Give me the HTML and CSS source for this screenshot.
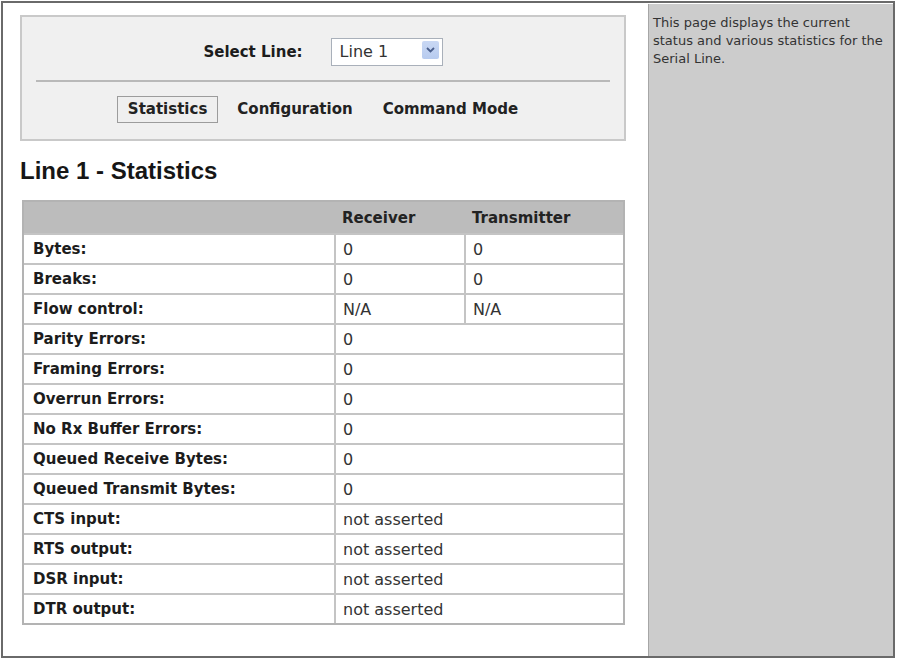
FILE: index.html
```html
<!DOCTYPE html>
<html lang="en">
<head>
    <meta charset="UTF-8">
    <title>Serial Line Statistics</title>
    <link rel="stylesheet" href="styles.css">
</head>
<body>
    <div class="frame">
        <div class="main">
            <div class="toolbox">
                <div class="line-select">
                    <span class="select-label">Select Line:</span>
                    <div class="select">
                        <span>Line 1</span>
                        <span class="select-arrow">
                            <svg width="9" height="6" viewBox="0 0 9 6"><path d="M1 1 L4.5 4.5 L8 1" fill="none" stroke="#4a5f8c" stroke-width="1.8"/></svg>
                        </span>
                    </div>
                </div>
                <div class="divider"></div>
                <div class="tabs">
                    <span class="tab active">Statistics</span>
                    <span class="tab">Configuration</span>
                    <span class="tab">Command Mode</span>
                </div>
            </div>

            <h1>Line 1 - Statistics</h1>

            <table class="stats">
                <colgroup>
                    <col class="col-label">
                    <col class="col-rx">
                    <col class="col-tx">
                </colgroup>
                <tr>
                    <th></th>
                    <th>Receiver</th>
                    <th>Transmitter</th>
                </tr>
                <tr><td class="label">Bytes:</td><td>0</td><td>0</td></tr>
                <tr><td class="label">Breaks:</td><td>0</td><td>0</td></tr>
                <tr><td class="label">Flow control:</td><td>N/A</td><td>N/A</td></tr>
                <tr><td class="label">Parity Errors:</td><td colspan="2">0</td></tr>
                <tr><td class="label">Framing Errors:</td><td colspan="2">0</td></tr>
                <tr><td class="label">Overrun Errors:</td><td colspan="2">0</td></tr>
                <tr><td class="label">No Rx Buffer Errors:</td><td colspan="2">0</td></tr>
                <tr><td class="label">Queued Receive Bytes:</td><td colspan="2">0</td></tr>
                <tr><td class="label">Queued Transmit Bytes:</td><td colspan="2">0</td></tr>
                <tr><td class="label">CTS input:</td><td colspan="2">not asserted</td></tr>
                <tr><td class="label">RTS output:</td><td colspan="2">not asserted</td></tr>
                <tr><td class="label">DSR input:</td><td colspan="2">not asserted</td></tr>
                <tr><td class="label">DTR output:</td><td colspan="2">not asserted</td></tr>
            </table>
        </div>

        <div class="help">
            This page displays the current status and various statistics for the Serial Line.
        </div>
    </div>
</body>
</html>
```

FILE: styles.css
```css
body {
    margin: 0;
    background-color: #fff;
    font-family: 'DejaVu Sans', sans-serif;
    color: #1c1c1c;
}

.frame {
    display: flex;
    margin: 1px 3px 0 1px;
    height: 653px;
    border: 2px solid #6a6a6a;
    background-color: #fff;
}

.main {
    width: 606px;
    padding: 12px 22px 0 17px;
}

.toolbox {
    background-color: #f0f0f0;
    border: 2px solid #c9c9c9;
    padding: 21px 0 16px;
}

.line-select {
    display: flex;
    justify-content: center;
    align-items: center;
    gap: 28px;
}

.select-label {
    font-size: 15px;
    font-weight: bold;
}

.select {
    display: flex;
    justify-content: space-between;
    align-items: flex-start;
    width: 112px;
    height: 28px;
    box-sizing: border-box;
    padding: 2px 3px 0 8px;
    background-color: #fff;
    border: 1px solid #a9b0ba;
    font-size: 16px;
    line-height: 22px;
    color: #333;
}

.select-arrow {
    display: flex;
    align-items: center;
    justify-content: center;
    width: 17px;
    height: 18px;
    background: linear-gradient(#c9d8f4, #b7cbef);
    border-radius: 2px;
}

.divider {
    height: 2px;
    background-color: #b9b9b9;
    margin: 14px 14px 14px;
}

.tabs {
    display: flex;
    justify-content: center;
    gap: 8px;
}

.tab {
    padding: 0 10px;
    height: 25px;
    line-height: 25px;
    border: 1px solid transparent;
    font-size: 15px;
    font-weight: bold;
    color: #222;
}

.tab.active {
    border-color: #9c9c9c;
    background-color: #efefef;
}

h1 {
    font-family: 'Liberation Sans', Arial, sans-serif;
    font-size: 24px;
    line-height: 28px;
    margin: 16px 0 15px 0;
    color: #161616;
}

.stats {
    margin-left: 2px;
    width: 603px;
    border: 2px solid #b3b3b3;
    border-spacing: 0;
    table-layout: fixed;
}

.col-label { width: 310px; }
.col-rx { width: 130px; }
.col-tx { width: 159px; }

.stats th {
    height: 31px;
    padding: 0 8px;
    background-color: #bcbcbc;
    text-align: left;
    font-size: 15px;
    color: #222;
}

.stats td {
    box-sizing: border-box;
    height: 30px;
    padding: 0 7px;
    border-top: 2px solid #c4c4c4;
    border-left: 2px solid #c4c4c4;
    font-size: 16px;
    color: #333;
}

.stats td.label {
    border-left: none;
    padding-left: 9px;
    font-size: 15px;
    font-weight: bold;
    color: #1c1c1c;
}

.help {
    flex: 1;
    margin-top: 1px;
    padding: 10px 4px 0 4px;
    background-color: #cccccc;
    border-left: 1px solid #a6a6a6;
    font-size: 13px;
    line-height: 18px;
    color: #333;
}
```
